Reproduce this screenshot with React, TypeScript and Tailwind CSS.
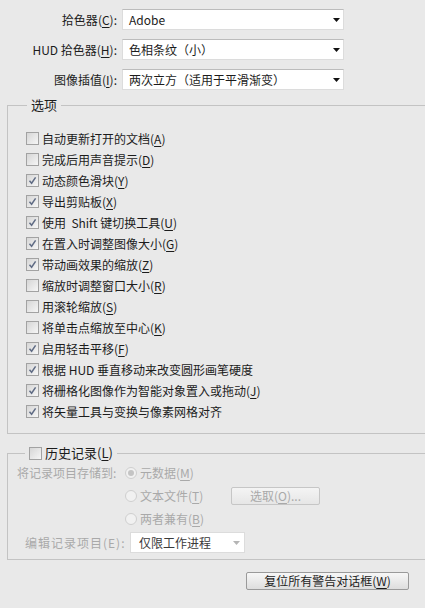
import React from 'react';

type Opt = { text: string; key?: string; checked: boolean };

const options: Opt[] = [
  { text: '自动更新打开的文档', key: 'A', checked: false },
  { text: '完成后用声音提示', key: 'D', checked: false },
  { text: '动态颜色滑块', key: 'Y', checked: true },
  { text: '导出剪贴板', key: 'X', checked: true },
  { text: '使用  Shift 键切换工具', key: 'U', checked: true },
  { text: '在置入时调整图像大小', key: 'G', checked: true },
  { text: '带动画效果的缩放', key: 'Z', checked: true },
  { text: '缩放时调整窗口大小', key: 'R', checked: false },
  { text: '用滚轮缩放', key: 'S', checked: false },
  { text: '将单击点缩放至中心', key: 'K', checked: false },
  { text: '启用轻击平移', key: 'F', checked: true },
  { text: '根据 HUD 垂直移动来改变圆形画笔硬度', checked: true },
  { text: '将栅格化图像作为智能对象置入或拖动', key: 'J', checked: true },
  { text: '将矢量工具与变换与像素网格对齐', checked: true },
];

const Mn = ({ text, k }: { text: string; k?: string }) => (
  <span className="whitespace-pre">
    {text}
    {k && (
      <>
        (<span className="underline underline-offset-2">{k}</span>)
      </>
    )}
  </span>
);

const Check = ({ checked }: { checked: boolean }) => (
  <span className="w-[13px] h-[13px] shrink-0 border border-[#a2a2a2] bg-linear-to-br from-[#d6d6d6] to-[#f6f6f6] flex items-center justify-center">
    {checked && (
      <svg width="9" height="9" viewBox="0 0 9 9">
        <path d="M1.5 4.8 L3.6 7.2 L7.6 1.4" stroke="#5f6b84" strokeWidth="1.5" fill="none" />
      </svg>
    )}
  </span>
);

const Radio = ({ on }: { on?: boolean }) => (
  <span className="w-[12px] h-[12px] shrink-0 rounded-full border border-[#cfcfcf] bg-[#f1f1f1] flex items-center justify-center">
    {on && <span className="w-[6px] h-[6px] rounded-full bg-[#c4c4c4]" />}
  </span>
);

const Arrow = ({ color }: { color: string }) => (
  <svg width="7" height="4" viewBox="0 0 7 4">
    <path d="M0 0 H7 L3.5 4 Z" fill={color} />
  </svg>
);

const SelectRow = ({ label, k, value }: { label: string; k: string; value: string }) => (
  <div className="flex items-center h-[21px]">
    <div className="w-[118px] text-right pr-[1px]">
      <Mn text={label} k={k} />:
    </div>
    <div className="ml-[4px] w-[222px] h-[21px] bg-white border border-[#dcdcdc] border-t-[#bcbcbc] flex items-center justify-between pl-[6px] pr-[3px]">
      <span>{value}</span>
      <Arrow color="#111" />
    </div>
  </div>
);

export default function App() {
  return (
    <div className="w-[425px] h-[608px] overflow-hidden bg-[#e9e9e9] text-[12px] leading-[16px] text-[#1c1c1c] font-['Noto_Sans_CJK_SC','Noto_Sans',sans-serif]">
      <div className="pt-[9px] flex flex-col gap-[9px]">
        <SelectRow label="拾色器" k="C" value="Adobe" />
        <SelectRow label="HUD 拾色器" k="H" value="色相条纹（小）" />
        <SelectRow label="图像插值" k="I" value="两次立方（适用于平滑渐变）" />
      </div>

      <fieldset className="mt-[7px] ml-[7px] border-l border-t border-b border-[#c3c3c3] pl-[18px] pt-[15px] pb-[11px]">
        <legend className="ml-[1px] px-[4px] text-[13px] leading-[16px]">选项</legend>
        {options.map((o, i) => (
          <div key={i} className="flex items-center h-[21px] gap-[3px]">
            <Check checked={o.checked} />
            <Mn text={o.text} k={o.key} />
          </div>
        ))}
      </fieldset>

      <fieldset className="mt-[11px] ml-[7px] border-l border-t border-b border-[#c3c3c3] pb-[6px] pt-[2px]">
        <legend className="ml-[17px] px-[4px] flex items-center gap-[3px] h-[16px] text-[13px]">
          <Check checked={false} />
          <Mn text="历史记录" k="L" />
        </legend>
        <div className="text-[#a9a9a9]">
          <div className="flex items-center h-[20px]">
            <div className="w-[117px] pl-[9px]">将记录项目存储到:</div>
            <Radio on />
            <span className="ml-[3px]">
              <Mn text="元数据" k="M" />
            </span>
          </div>
          <div className="flex items-center h-[26px]">
            <div className="w-[117px]" />
            <Radio />
            <span className="ml-[3px] w-[91px]">
              <Mn text="文本文件" k="T" />
            </span>
            <div className="w-[89px] h-[18px] border border-[#c6c6c6] bg-linear-to-b from-[#f4f4f4] to-[#e6e6e6] rounded-[2px] flex items-center justify-center">
              <Mn text="选取" k="O" />
              ...
            </div>
          </div>
          <div className="flex items-center h-[20px]">
            <div className="w-[117px]" />
            <Radio />
            <span className="ml-[3px]">
              <Mn text="两者兼有" k="B" />
            </span>
          </div>
          <div className="flex items-center h-[21px] mt-[3px]">
            <div className="w-[118px] pl-[17px] tracking-[1px] whitespace-nowrap">编辑记录项目(E):</div>
            <div className="ml-[4px] w-[115px] h-[21px] bg-white border border-[#dcdcdc] flex items-center justify-between pl-[8px] pr-[4px]">
              <span className="text-[#3a3a3a]">仅限工作进程</span>
              <Arrow color="#b5b5b5" />
            </div>
          </div>
        </div>
      </fieldset>

      <div className="flex justify-end pr-[16px] mt-[12px]">
        <button className="w-[163px] h-[18px] border border-[#9a9a9a] rounded-[2px] bg-linear-to-b from-[#f7f7f7] to-[#dedede] flex items-center justify-center text-[12px] leading-[16px] text-[#1c1c1c]">
          <Mn text="复位所有警告对话框" k="W" />
        </button>
      </div>
    </div>
  );
}
